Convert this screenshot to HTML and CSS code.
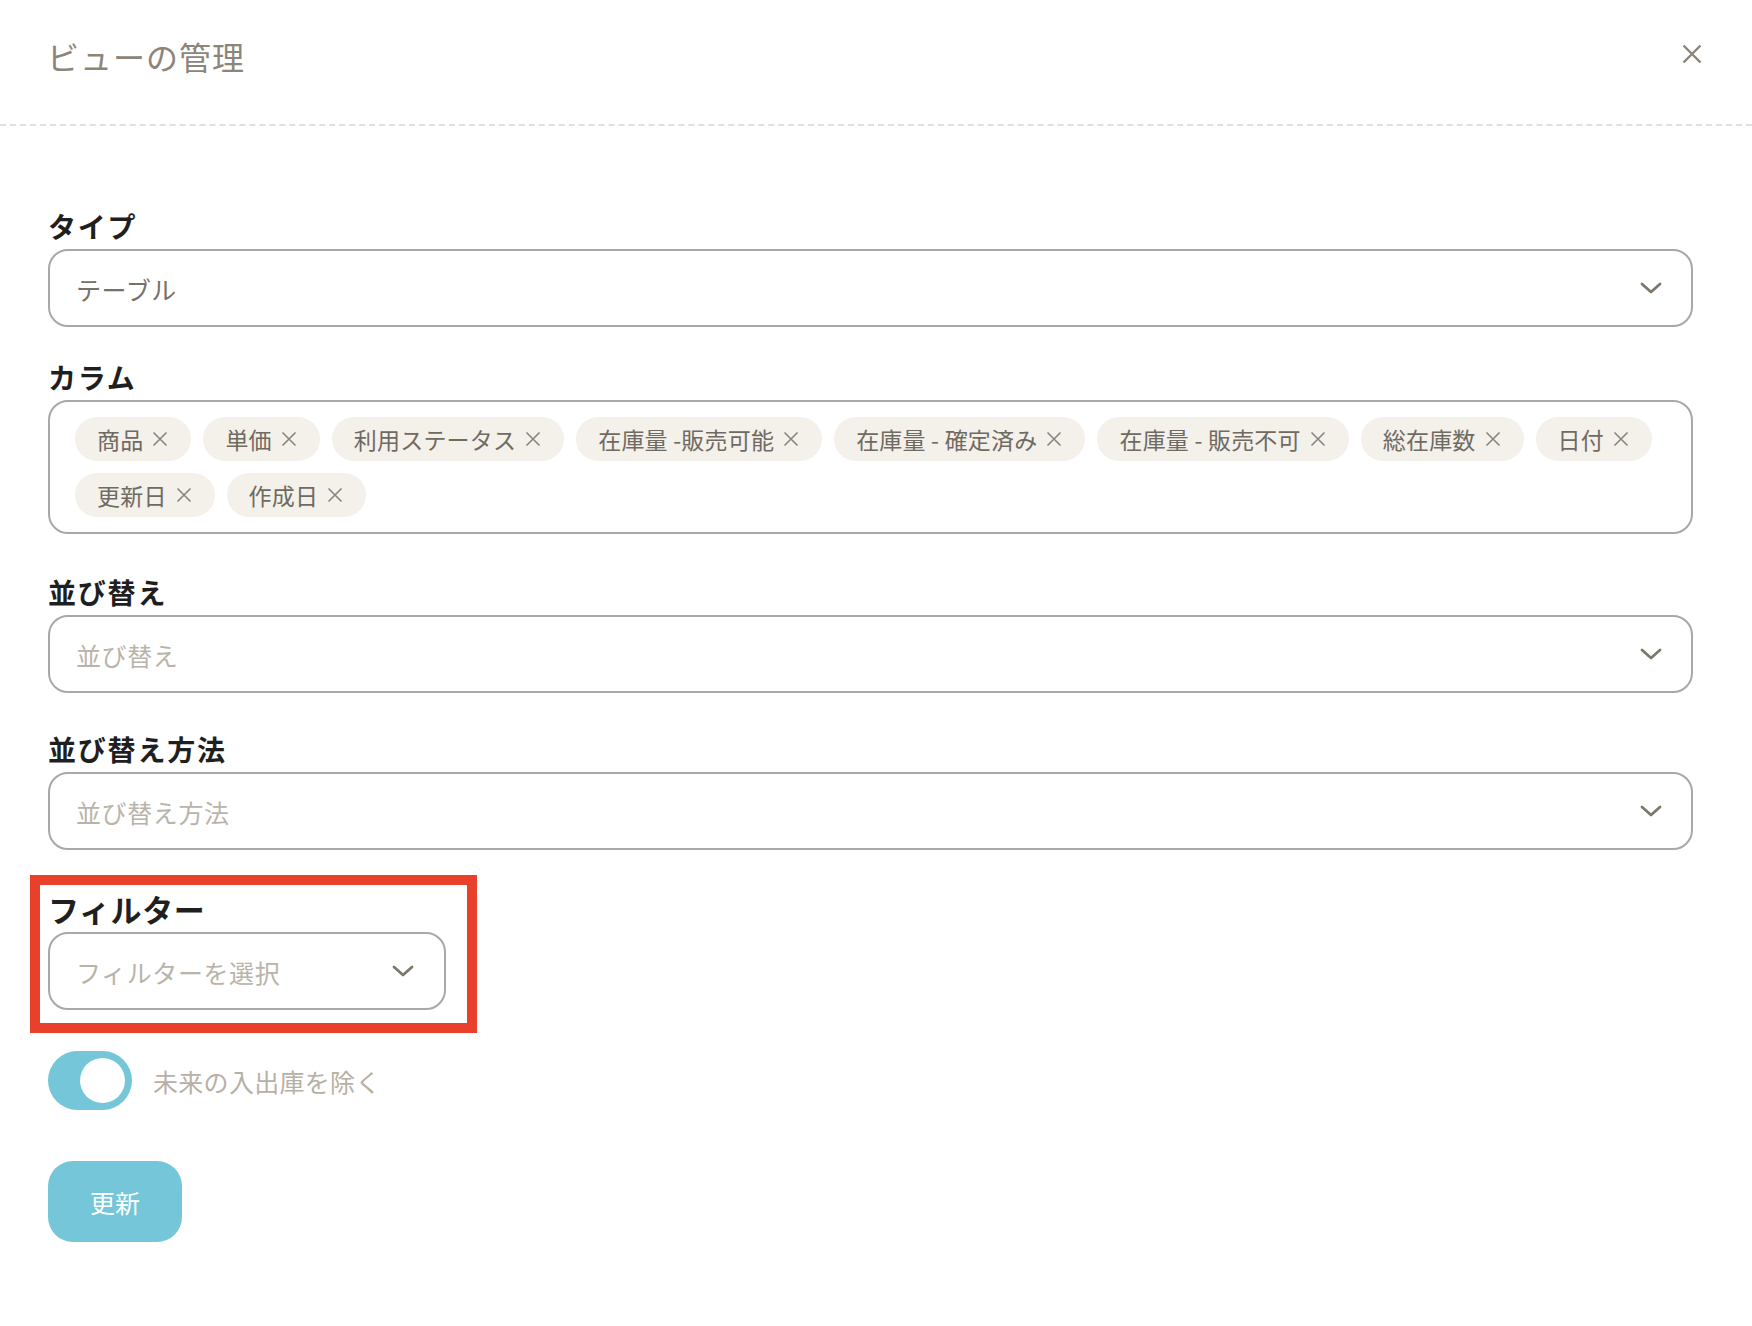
FILE: index.html
```html
<!DOCTYPE html>
<html lang="ja">
<head>
    <meta charset="UTF-8">
    <title>ビューの管理</title>
    <link rel="stylesheet" href="styles.css">
</head>
<body>

<div class="modal-header">
    <h2 class="modal-title">ビューの管理</h2>
    <button class="close-btn" aria-label="閉じる">
        <svg width="20" height="20" viewBox="0 0 20 20"><path d="M1.5 1.5 L18.5 18.5 M18.5 1.5 L1.5 18.5" /></svg>
    </button>
</div>

<div class="modal-body">

    <div class="field field-first">
        <label>タイプ</label>
        <div class="select">
            <span class="value">テーブル</span>
            <svg class="chevron" width="22" height="12" viewBox="0 0 22 12"><path d="M2 2 L11 10 L20 2" /></svg>
        </div>
    </div>

    <div class="field field-columns">
        <label>カラム</label>
        <div class="chip-box">
            <span class="chip">商品<svg viewBox="0 0 16 16"><path d="M1.5 1.5 L14.5 14.5 M14.5 1.5 L1.5 14.5" /></svg></span>
            <span class="chip">単価<svg viewBox="0 0 16 16"><path d="M1.5 1.5 L14.5 14.5 M14.5 1.5 L1.5 14.5" /></svg></span>
            <span class="chip">利用ステータス<svg viewBox="0 0 16 16"><path d="M1.5 1.5 L14.5 14.5 M14.5 1.5 L1.5 14.5" /></svg></span>
            <span class="chip">在庫量 -販売可能<svg viewBox="0 0 16 16"><path d="M1.5 1.5 L14.5 14.5 M14.5 1.5 L1.5 14.5" /></svg></span>
            <span class="chip">在庫量 - 確定済み<svg viewBox="0 0 16 16"><path d="M1.5 1.5 L14.5 14.5 M14.5 1.5 L1.5 14.5" /></svg></span>
            <span class="chip">在庫量 - 販売不可<svg viewBox="0 0 16 16"><path d="M1.5 1.5 L14.5 14.5 M14.5 1.5 L1.5 14.5" /></svg></span>
            <span class="chip">総在庫数<svg viewBox="0 0 16 16"><path d="M1.5 1.5 L14.5 14.5 M14.5 1.5 L1.5 14.5" /></svg></span>
            <span class="chip">日付<svg viewBox="0 0 16 16"><path d="M1.5 1.5 L14.5 14.5 M14.5 1.5 L1.5 14.5" /></svg></span>
            <span class="chip">更新日<svg viewBox="0 0 16 16"><path d="M1.5 1.5 L14.5 14.5 M14.5 1.5 L1.5 14.5" /></svg></span>
            <span class="chip">作成日<svg viewBox="0 0 16 16"><path d="M1.5 1.5 L14.5 14.5 M14.5 1.5 L1.5 14.5" /></svg></span>
        </div>
    </div>

    <div class="field field-sort">
        <label>並び替え</label>
        <div class="select">
            <span class="placeholder">並び替え</span>
            <svg class="chevron" width="22" height="12" viewBox="0 0 22 12"><path d="M2 2 L11 10 L20 2" /></svg>
        </div>
    </div>

    <div class="field">
        <label>並び替え方法</label>
        <div class="select">
            <span class="placeholder">並び替え方法</span>
            <svg class="chevron" width="22" height="12" viewBox="0 0 22 12"><path d="M2 2 L11 10 L20 2" /></svg>
        </div>
    </div>

    <div class="highlight">
        <div class="field field-filter">
            <label>フィルター</label>
            <div class="select select-small">
                <span class="placeholder">フィルターを選択</span>
                <svg class="chevron" width="22" height="12" viewBox="0 0 22 12"><path d="M2 2 L11 10 L20 2" /></svg>
            </div>
        </div>
    </div>

    <div class="toggle-row">
        <div class="toggle on"><span class="knob"></span></div>
        <span class="toggle-label">未来の入出庫を除く</span>
    </div>

    <button class="submit-btn">更新</button>

</div>

</body>
</html>
```

FILE: styles.css
```css
body {
    margin: 0;
    background: #fff;
    font-family: "Noto Sans CJK JP", "Noto Sans", sans-serif;
    color: #222;
}
.modal-header {
    display: flex;
    align-items: center;
    justify-content: space-between;
    padding: 34px 50px 46px 47px;
    border-bottom: 2px dashed #e3e0db;
}
.modal-title {
    margin: 0;
    font-size: 32px;
    line-height: 44px;
    font-weight: 400;
    letter-spacing: 1px;
    color: #8c8579;
}
.close-btn {
    background: none;
    border: none;
    padding: 0;
    width: 20px;
    height: 20px;
    margin-top: -4px;
    cursor: pointer;
}
.close-btn svg {
    display: block;
    stroke: #8a8479;
    stroke-width: 2.4;
    fill: none;
}
.modal-body {
    padding: 82px 59px 60px 48px;
}
.field {
    margin-top: 38px;
}
.field-first {
    margin-top: 0;
}
.field-columns {
    margin-top: 32px;
}
.field-sort {
    margin-top: 40px;
}
.field label {
    display: block;
    font-size: 28px;
    line-height: 36px;
    font-weight: 700;
    letter-spacing: 1.8px;
    color: #1f1f1f;
    margin-bottom: 5px;
}
.select {
    box-sizing: border-box;
    height: 78px;
    border: 2px solid #a8a8a8;
    border-radius: 20px;
    display: flex;
    align-items: center;
    justify-content: space-between;
    padding: 2px 29px 0 26px;
    font-size: 25px;
    letter-spacing: 0.6px;
}
.select .value {
    color: #767169;
}
.select .placeholder {
    color: #b9b4aa;
}
.chevron {
    flex: none;
    margin-top: -2px;
}
.chevron path {
    fill: none;
    stroke: #7d786e;
    stroke-width: 2.8;
    stroke-linecap: round;
    stroke-linejoin: round;
}
.chip-box {
    box-sizing: border-box;
    border: 2px solid #a8a8a8;
    border-radius: 20px;
    padding: 15px 25px;
    display: flex;
    flex-wrap: wrap;
    gap: 12px;
}
.chip {
    display: inline-flex;
    align-items: center;
    gap: 9px;
    height: 44px;
    padding: 0 23px 0 22px;
    border-radius: 22px;
    background: #f4f0ea;
    color: #6f6a62;
    font-size: 23px;
    letter-spacing: 0.2px;
    white-space: nowrap;
}
.chip svg {
    width: 16px;
    height: 16px;
    flex: none;
}
.chip svg path {
    fill: none;
    stroke: #8a857b;
    stroke-width: 1.6;
}
.highlight {
    display: inline-block;
    margin: 25px 0 0 -18px;
    padding: 6px 21px 13px 8px;
    border: 10px solid #e8402a;
}
.field-filter {
    margin-top: 0;
}
.field-filter label {
    font-size: 31px;
    letter-spacing: 0.6px;
}
.select-small {
    width: 398px;
    padding-right: 30px;
}
.toggle-row {
    display: flex;
    align-items: center;
    gap: 21px;
    margin-top: 18px;
}
.toggle {
    box-sizing: border-box;
    width: 84px;
    height: 59px;
    border-radius: 30px;
    background: #74c6d8;
    padding: 7px;
    display: flex;
    align-items: center;
}
.toggle.on {
    justify-content: flex-end;
}
.knob {
    width: 45px;
    height: 45px;
    border-radius: 50%;
    background: #fff;
}
.toggle-label {
    font-size: 25px;
    color: #b6b0a5;
    letter-spacing: 0.3px;
}
.submit-btn {
    display: block;
    margin-top: 51px;
    width: 134px;
    height: 81px;
    border: none;
    border-radius: 25px;
    background: #74c6d8;
    color: #fff;
    font-family: inherit;
    font-size: 25px;
    cursor: pointer;
}
.submit-btn:hover {
    background-color: #68bccf;
}
```
